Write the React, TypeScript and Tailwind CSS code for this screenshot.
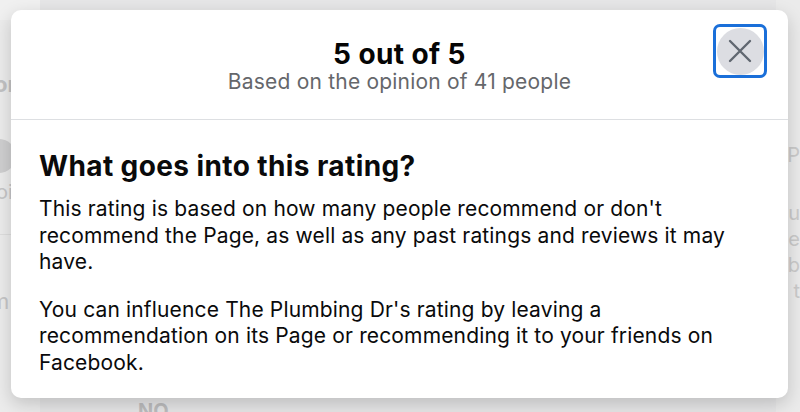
import React from "react";

function CloseIcon() {
  return (
    <svg width="24" height="24" viewBox="0 0 24 24" fill="none">
      <path d="M2 2 L22 22 M22 2 L2 22" stroke="#606770" strokeWidth="2.4" strokeLinecap="round" />
    </svg>
  );
}

export default function App() {
  return (
    <div
      className="relative w-[800px] h-[412px] overflow-hidden bg-[#e6e6e7]"
      style={{ fontFamily: "Inter, 'Noto Sans', sans-serif" }}
    >
      {/* dimmed page behind */}
      <div className="absolute inset-0 flex">
        <div className="w-[40px] h-full bg-[#ececec] flex flex-col">
          <div className="h-[20px] bg-[#f0f0f0]" />
          <div className="h-[215px] border-b border-[#dedede] flex flex-col">
            <span className="mt-[48px] ml-[-6px] text-[22px] font-bold text-[#c2c2c3]">or</span>
            <div className="mt-[38px] ml-[-18px] w-[34px] h-[34px] rounded-full bg-[#cfcfd0]" />
            <span className="mt-[4px] ml-[-4px] text-[20px] text-[#c6c6c7]">oi</span>
          </div>
          <span className="mt-[50px] ml-[-10px] text-[22px] text-[#c6c6c7]">m</span>
        </div>
        <div className="flex-1" />
        <div className="w-[24px] h-full bg-[#ebebeb] flex flex-col items-end">
          <span className="mt-[140px] text-[20px] text-[#cacaca]">P</span>
          <span className="mt-[30px] text-[20px] text-[#cacaca] leading-[26px]">ou</span>
          <span className="text-[20px] text-[#cacaca] leading-[26px]">ie</span>
          <span className="text-[20px] text-[#cacaca] leading-[26px]">b</span>
          <span className="text-[20px] text-[#cacaca] leading-[26px]">t</span>
        </div>
      </div>
      <div className="absolute left-[138px] top-[396px] text-[20px] font-bold text-[#bdbdbe]">NO</div>

      {/* modal */}
      <div className="absolute left-[11px] top-[10px] w-[777px] h-[388px] bg-white rounded-[10px] shadow-[0_6px_18px_rgba(0,0,0,0.18)] flex flex-col">
        <div className="relative h-[109px] flex flex-col items-center pt-[28px]">
          <div className="text-[28px] leading-[32px] font-bold text-[#050505] tracking-[0.4px]">5 out of 5</div>
          <div className="text-[21px] leading-[26px] text-[#65676b] mt-[-1px] tracking-[0.2px]">Based on the opinion of 41 people</div>
          <button className="absolute right-[21px] top-[14px] w-[54px] h-[54px] rounded-[7px] border-[3px] border-[#1a6fd9] flex items-center justify-center">
            <span className="w-[47px] h-[47px] rounded-full bg-[#dcdde2] flex items-center justify-center">
              <CloseIcon />
            </span>
          </button>
        </div>
        <div className="h-px bg-[#dddfe2]" />
        <div className="px-[28px] pt-[30px] flex flex-col text-[#0a0a0b]">
          <h2 className="text-[28px] leading-[32px] font-bold tracking-[0.4px]">What goes into this rating?</h2>
          <p className="mt-[14px] text-[21px] leading-[26.6px] tracking-[0.15px]">
            This rating is based on how many people recommend or don't recommend the Page, as well as any past ratings and reviews it may have.
          </p>
          <p className="mt-[21px] text-[21px] leading-[26.6px] tracking-[0.15px]">
            You can influence The Plumbing Dr's rating by leaving a recommendation on its Page or recommending it to your friends on Facebook.
          </p>
        </div>
      </div>
    </div>
  );
}
